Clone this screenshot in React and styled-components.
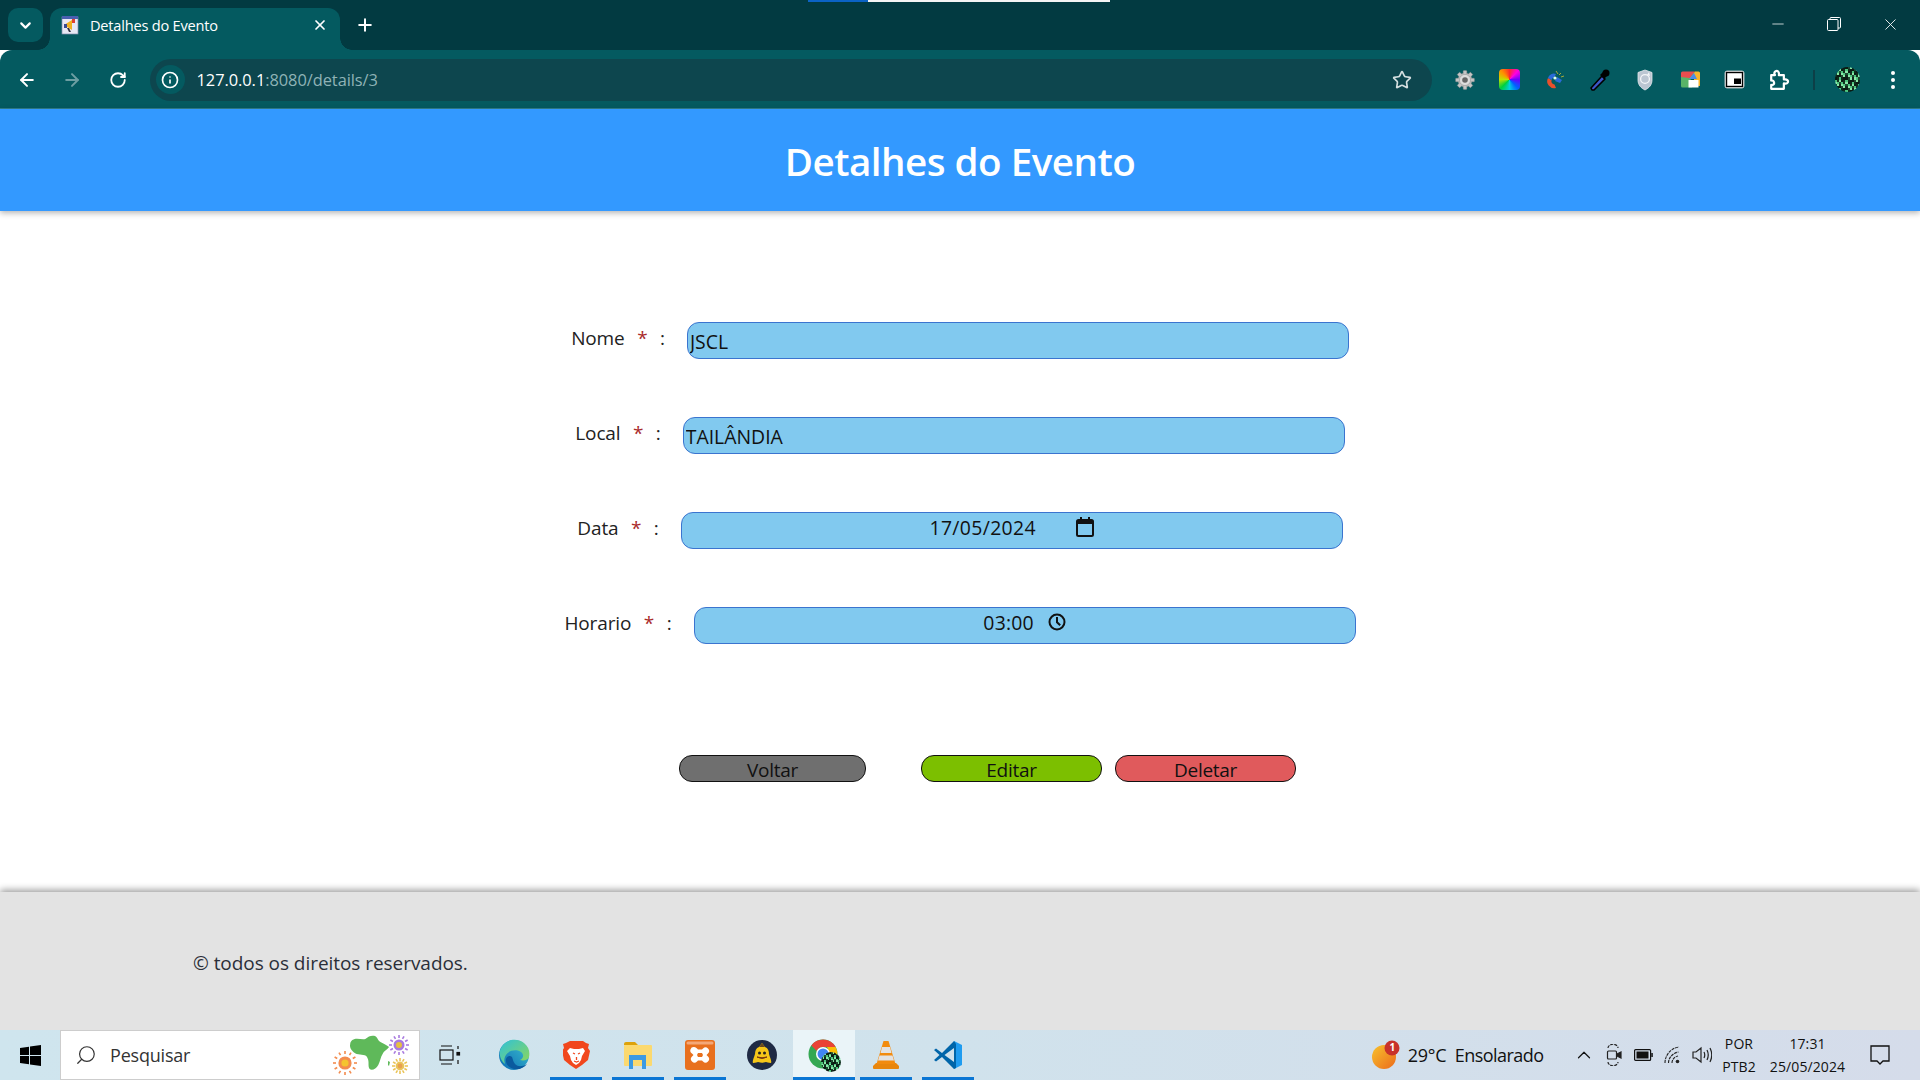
import React from "react";
import styled, { createGlobalStyle } from "styled-components";
import { ArrowLeft, ArrowRight, RotateCw, Info, Star, X, Plus, ChevronDown, Minus, Search, ChevronUp } from "lucide-react";

const Global = createGlobalStyle`
  html, body { margin: 0; padding: 0; height: 100%; overflow: hidden; }
  body { font-family: "Open Sans", "Noto Sans", "Liberation Sans", sans-serif; background: #fff; }
  * { box-sizing: border-box; }
`;

const Page = styled.div`
  width: 1920px; height: 1080px; display: flex; flex-direction: column; overflow: hidden; background: #fff;
`;

/* browser chrome */
const TabStrip = styled.div`
  position: relative; height: 50px; background: #023a41; display: flex; align-items: flex-end; flex-shrink: 0; padding-right: 2px;
`;
const LoadLine = styled.div`
  position: absolute; top: 0; left: 808px; width: 302px; height: 2px;
  background: linear-gradient(to right, #0b63c5 0, #0b63c5 60px, #f4f4f4 60px);
`;
const TabMenu = styled.div`
  width: 35px; height: 34px; margin: 0 7px 8px 8px; border-radius: 10px; background: #045a60; color: #fff;
  display: flex; align-items: center; justify-content: center;
`;
const Tab = styled.div`
  position: relative; width: 290px; height: 42px; background: #045a60; border-radius: 12px 12px 0 0;
  display: flex; align-items: center; padding: 0 12px 8px 11px; color: #fff; font-size: 14.6px; letter-spacing: -0.22px;
  &::before, &::after { content: ""; position: absolute; bottom: 0; width: 12px; height: 12px; }
  &::before { left: -12px; background: radial-gradient(circle at 0 0, transparent 11.5px, #045a60 12px); }
  &::after { right: -12px; background: radial-gradient(circle at 100% 0, transparent 11.5px, #045a60 12px); }
`;
const TabTitle = styled.span`
  margin-left: 11px; flex: 1;
`;
const NewTab = styled.div`
  width: 24px; height: 24px; margin: 0 0 13px 13px; color: #fff; display: flex; align-items: center; justify-content: center;
`;
const Grow = styled.div` flex: 1; `;
const WinBtn = styled.div`
  width: 56px; height: 50px; color: #fff; display: flex; align-items: center; justify-content: center; padding-bottom: 2px;
`;
const Toolbar = styled.div`
  height: 59px; background: #045a60; border-radius: 12px 12px 0 0; display: flex; align-items: center; flex-shrink: 0;
  padding: 1px 5px 0 4px; margin-top: 0; border-bottom: 1px solid #2f7f8c;
`;
const NavBtn = styled.div`
  width: 45.5px; height: 40px; display: flex; align-items: center; justify-content: center; color: ${p => p.$dim ? "#6d9ea2" : "#fff"};
`;
const Omni = styled.div`
  flex: 1; height: 42px; margin-left: 9px; border-radius: 21px; background: #0d464e; display: flex; align-items: center; padding: 0 20px 0 6px;
`;
const InfoChip = styled.div`
  width: 29px; height: 29px; border-radius: 50%; background: #045a60; color: #fff; display: flex; align-items: center; justify-content: center;
`;
const Url = styled.div`
  margin-left: 12px; flex: 1; font-size: 16.4px; letter-spacing: -0.05px; color: #8fb3b6;
  b { font-weight: 400; color: #fff; }
`;
const ExtRow = styled.div`
  display: flex; align-items: center; margin-left: 10px;
`;
const ExtBtn = styled.div`
  width: 45px; height: 40px; display: flex; align-items: center; justify-content: center;
`;
const Wheel = styled.div`
  width: 21px; height: 21px; border-radius: 4px;
  background: conic-gradient(from 0deg, #ff2a2a, #ff00e0, #6a00ff, #0060ff, #00d0e0, #00d040, #c0e000, #ff9000, #ff2a2a);
`;
const Divider = styled.div`
  width: 2px; height: 20px; background: #0d3f47; margin: 0 10px 0 11px;
`;

/* page */
const Header = styled.header`
  height: 102px; background: #3399ff; color: #fff; display: flex; align-items: center; justify-content: center; flex-shrink: 0;
  box-shadow: 0 2px 6px rgba(0,0,0,.3); position: relative; z-index: 1; padding-top: 3px;
`;
const Title = styled.h1`
  margin: 0; font-size: 38.6px; font-weight: 600; letter-spacing: -0.5px; line-height: 1;
`;
const Main = styled.main`
  flex: 1; padding-top: 111px; background: #fff;
`;
const Row = styled.div`
  display: flex; justify-content: center; align-items: flex-start; height: 37px; margin-bottom: 58px;
`;
const Label = styled.label`
  display: flex; gap: 12.5px; margin-right: 22px; font-size: 19px; letter-spacing: -0.12px; color: #222; line-height: 32px;
  white-space: nowrap;
`;
const Req = styled.span` color: #a92b2b; `;
const TextField = styled.input`
  width: 662px; height: 37px; border: 1px solid #3b74cf; border-radius: 12px; background: #81c9ef; color: #111; outline: none;
  font: 400 19.4px "Open Sans", sans-serif; letter-spacing: 0; padding: 2px 2px 0;
`;
const PickerField = styled.div`
  width: 662px; height: 37px; border: 1px solid #3b74cf; border-radius: 12px; background: #81c9ef; color: #111;
  display: flex; align-items: center; justify-content: center; gap: ${p => p.$gap}px; font-size: 19.4px; letter-spacing: ${p => p.$ls}px; padding-bottom: 7px;
`;
const Actions = styled.div`
  display: flex; padding: 53px 0 0 679px;
`;
const ActionBtn = styled.button`
  width: ${p => p.$w}px; height: 27px; margin-right: ${p => p.$mr}px; border: 1px solid #111; border-radius: 13px; background: ${p => p.$bg}; color: #111;
  font: 400 19px "Open Sans", sans-serif; letter-spacing: -0.3px; padding: 2px 0 0; line-height: 24px; display: flex; align-items: center; justify-content: center;
`;
const Footer = styled.footer`
  height: 138px; background: #e3e3e3; flex-shrink: 0; box-shadow: 0 -2px 7px rgba(0,0,0,.4); padding: 57px 0 0 193px;
  font-size: 19px; letter-spacing: -0.05px; color: #2b2f38; line-height: 28px; position: relative;
`;

/* taskbar */
const Taskbar = styled.div`
  height: 50px; flex-shrink: 0; display: flex; align-items: stretch; position: relative; color: #111;
  background: linear-gradient(to right, #cfe5ee, #d0e2ec 50%, #d5dcea);
`;
const StartBtn = styled.div`
  width: 60px; display: flex; align-items: center; justify-content: center;
`;
const SearchBox = styled.div`
  width: 360px; background: #fff; border: 1px solid #cdcdcd; display: flex; align-items: center; padding: 0 8px 0 14px; font-size: 18px; letter-spacing: -0.2px; color: #333;
`;
const SearchLabel = styled.span` margin-left: 13px; flex: 1; `;
const TaskView = styled.div`
  width: 63px; padding-right: 4px; display: flex; align-items: center; justify-content: center;
`;
const AppSlot = styled.div`
  position: relative; width: 62px; display: flex; align-items: center; justify-content: center;
  background: ${p => p.$active ? "#eaf4f8" : "transparent"};
  &::after {
    content: ""; display: ${p => p.$open || p.$active ? "block" : "none"}; position: absolute; bottom: 0; height: 3px;
    left: ${p => p.$active ? 0 : 5}px; right: ${p => p.$active ? 0 : 5}px; background: #0b76d4;
  }
`;
const Tray = styled.div`
  margin-left: auto; display: flex; align-items: center; padding-right: 19px; font-size: 18px; letter-spacing: -0.3px; color: #111;
`;
const Weather = styled.span`
  margin-left: 8px; white-space: nowrap;
`;
const Condition = styled.span`
  margin: 0 26px 0 8.5px; white-space: nowrap; letter-spacing: -0.55px;
`;
const TrayIcon = styled.div`
  width: 29.5px; display: flex; align-items: center; justify-content: center;
`;
const TrayText = styled.div`
  width: ${p => p.$w}px; margin-left: ${p => p.$ml || 0}px; display: flex; flex-direction: column; align-items: center; font-size: 14px; line-height: 23px; letter-spacing: 0.1px; white-space: nowrap;
`;
const Notice = styled.div`
  width: 42px; margin-left: 13px; display: flex; align-items: center; justify-content: center;
`;

/* drawings */
const Favicon = () => (
  <svg width="18" height="20" viewBox="0 0 18 20">
    <rect x="1" y="2" width="16" height="17" fill="#e8e8f4" stroke="#8890b0" strokeWidth=".7" />
    <rect x="1" y="1" width="16" height="3" fill="#4a5fb0" />
    <path d="M3 10l8-5v10z" fill="#f0b020" /><path d="M3 9h3v4H3z" fill="#3a4a90" /><path d="M11 4l3 0v4h-3z" fill="#e04030" />
    <path d="M6 13l2 4h2l-2-4z" fill="#334" />
  </svg>
);
const Gear = () => (
  <svg width="20" height="20" viewBox="0 0 20 20">
    <g fill="#c4c4c4" stroke="#888" strokeWidth=".4">
      <circle cx="10" cy="10" r="7" />
      {[0, 45, 90, 135, 180, 225, 270, 315].map(a => <rect key={a} x="8.2" y="0.6" width="3.6" height="4" rx=".6" transform={`rotate(${a} 10 10)`} />)}
    </g>
    <circle cx="10" cy="10" r="5" fill="#ddd" /><circle cx="10" cy="10" r="2.8" fill="#666" />
  </svg>
);
const Magnet = () => (
  <svg width="22" height="22" viewBox="0 0 22 22">
    <path d="M4 9a7 7 0 0 0 8 10l-1.5-3.6A3.2 3.2 0 0 1 7.6 11z" fill="#e8502c" />
    <path d="M4 9a6 6 0 0 1 8-4l-1.8 3.4A3 3 0 0 0 7.6 11z" fill="#2a6bd8" />
    <path d="M13 8l5 3-2 3-5-2z" fill="#2a6bd8" /><circle cx="11" cy="9" r="1.6" fill="#dfe" />
    <path d="M12 2l2 3M17 4l-2 2M20 7l-3 1" stroke="#a8a838" strokeWidth="1" />
  </svg>
);
const Dropper = () => (
  <svg width="22" height="24" viewBox="0 0 22 24">
    <path d="M3 22l-1-2L13 8l3 3L5 22z" fill="#3d56c8" stroke="#000" strokeWidth="1.6" strokeLinejoin="round" />
    <path d="M11 7l5-5 4 4-5 5z" fill="#000" /><circle cx="17" cy="5" r="3.5" fill="#000" />
  </svg>
);
const Shield = () => (
  <svg width="18" height="22" viewBox="0 0 18 22">
    <path d="M9 1l7 2.5V11c0 5-3 8-7 10-4-2-7-5-7-10V3.500z" fill="#bcc6d2" stroke="#e4e8ee" strokeWidth=".8" />
    <circle cx="9" cy="10" r="4.400" fill="none" stroke="#f4f6f8" strokeWidth="1.300" />
    <path d="M13 3l1 4-3-1z" fill="#f4f6f8" />
  </svg>
);
const Tile = () => (
  <svg width="20" height="17" viewBox="0 0 20 17">
    <path d="M1 2a1.500 1.500 0 0 1 1.500-1.500H15L9 8H1z" fill="#ea4d4f" />
    <path d="M15 .5h3.500A1.500 1.500 0 0 1 20 2v13l-6-.500V8H9z" fill="#f7b52c" />
    <path d="M1 6l8 1 3 2.500V16.500H2.500A1.500 1.500 0 0 1 1 15z" fill="#58b368" />
    <path d="M9 8l5-6 3 6z" fill="#4a8de8" /><rect x="8.500" y="9" width="10" height="7.500" fill="#fff" />
  </svg>
);
const Pip = () => (
  <svg width="21" height="19" viewBox="0 0 21 19">
    <rect x="1" y="1" width="19" height="17" rx="2" fill="#fff" stroke="#d8d8d8" strokeWidth=".8" />
    <rect x="2.500" y="2.500" width="16" height="14" fill="#fff" stroke="#000" strokeWidth="1.400" />
    <rect x="10" y="8.500" width="7" height="5.500" fill="#000" />
  </svg>
);
const Puzzle = () => (
  <svg width="22" height="22" viewBox="0 0 20 20" fill="none" stroke="#fff" strokeWidth="2" strokeLinejoin="round">
    <path d="M2 5.500h3.500a2.200 2.200 0 0 1 .5-3.500c1.600-.8 3.500.4 3 3.500h4.500V9.500c3-.6 4.300 1.300 3.500 2.800-.6 1.100-2 1.300-3.500.7V18H2v-3.500c2.200.4 3-1.100 2.500-2.500s-1.500-2-2.500-1.500z" />
  </svg>
);
const avatarCells = Array.from({ length: 144 }, (_, i) => ({ x: i % 12, y: Math.floor(i / 12), v: (i * i * 7 + i * 13 + (i % 5)) % 6 }));
const cellColors = ["#0a1a12", "#1d4a30", "#4ec47e", "#0f2a1c", "#8ae8a8", "#12301f"];
const Avatar = ({ size = 25 }) => (
  <svg width={size} height={size} viewBox="0 0 12 12">
    <defs><clipPath id={`av${size}`}><circle cx="6" cy="6" r="6" /></clipPath></defs>
    <g clipPath={`url(#av${size})`} shapeRendering="crispEdges">
      {avatarCells.map((c, i) => <rect key={i} x={c.x} y={c.y} width="1" height="1" fill={cellColors[c.v]} />)}
    </g>
  </svg>
);
const Kebab = () => (
  <svg width="6" height="20" viewBox="0 0 6 20" fill="#fff"><circle cx="3" cy="3" r="2" /><circle cx="3" cy="10" r="2" /><circle cx="3" cy="17" r="2" /></svg>
);
const Restore = () => (
  <svg width="14" height="14" viewBox="0 0 14 14" fill="none" stroke="#fff" strokeWidth="1"><rect x=".5" y="2.500" width="10.500" height="11" rx="1" /><path d="M3 2.500V1.500a1 1 0 0 1 1-1h8.500a1 1 0 0 1 1 1v8.500a1 1 0 0 1-1 1H11" /></svg>
);
const Calendar = () => (
  <svg width="18" height="20" viewBox="0 0 18 20">
    <path d="M4 0h2v2h6V0h2v2h1.500A2.500 2.500 0 0 1 18 4.500v13a2.500 2.500 0 0 1-2.500 2.500h-13A2.500 2.500 0 0 1 0 17.500v-13A2.500 2.500 0 0 1 2.500 2H4zM2 7v10.500a.5.5 0 0 0 .5.5h13a.5.5 0 0 0 .5-.5V7z" fill="#111" />
  </svg>
);
const Clock = () => (
  <svg width="18" height="18" viewBox="0 0 18 18" fill="none" stroke="#111" strokeWidth="2">
    <circle cx="9" cy="9" r="7.500" /><path d="M9 4v5.200l3.200 3" />
  </svg>
);
const WinLogo = () => (
  <svg width="21" height="21" viewBox="0 0 21 21" fill="#000"><path d="M0 3l9-1.300V10H0zM10 1.500L21 0v10H10zM0 11h9v8.300L0 18zM10 11h11v10l-11-1.500z" /></svg>
);
const flower = (cx, cy, r, c1, c2) => (
  <g>
    {Array.from({ length: 12 }, (_, i) => <rect key={i} x={cx - .8} y={cy - r} width="1.600" height="3" fill={c1} transform={`rotate(${i * 30} ${cx} ${cy})`} />)}
    <circle cx={cx} cy={cy} r={r * .55} fill={c1} /><circle cx={cx} cy={cy} r={r * .3} fill={c2} />
  </g>
);
const SearchArt = () => (
  <svg width="78" height="42" viewBox="0 0 78 42">
    <path transform="translate(1 0) scale(1.08 1)" d="M17 6c4-3 8 0 12-1 3-3 6-4 9-3 3 2 2 4 5 6 3 2 6 3 8 5-2 3-5 4-6 7-2 3-2 7-4 11-2 4-6 6-8 4-2-3 0-7-2-11-1-4-6-3-10-4-4-2-7-6-6-10 0-2 1-3 2-4z" fill="#5fb95a" />
    <path d="M55 27l2 1-1 4-1-1z" fill="#5fb95a" />
    {flower(12, 29, 12, "#f38c4f", "#f4c430")}
    {flower(66, 11, 10, "#a97adf", "#e6c040")}
    {flower(67, 32, 8, "#eac55b", "#e8a050")}
  </svg>
);
const TaskViewIcon = () => (
  <svg width="22" height="20" viewBox="0 0 22 20" fill="none" stroke="#111" strokeWidth="1.200">
    <path d="M2 1h11M2 19h11" /><rect x="1" y="5" width="13" height="10" /><path d="M19 1v3M19 15v4" /><rect x="18" y="7.500" width="2.500" height="2.500" fill="#111" />
  </svg>
);
const Edge = () => (
  <svg width="32" height="32" viewBox="0 0 32 32">
    <defs>
      <linearGradient id="edg" x1="0" y1="1" x2="1" y2="0"><stop offset="0" stopColor="#0b6bb4" /><stop offset="1" stopColor="#3ec3d0" /></linearGradient>
      <linearGradient id="edg2" x1="0" y1="0" x2="1" y2="1"><stop offset="0" stopColor="#2fc1d8" /><stop offset="1" stopColor="#8ed858" /></linearGradient>
    </defs>
    <circle cx="16" cy="16" r="15" fill="url(#edg)" />
    <path d="M3 9C7 1 18-2 26 4c5 4 6 9 5 14-1 3-5 4-9 3 4-2 4-6 1-8-4-3-12-2-15 3-2 3-2 6-1 9C3 22 0 15 3 9z" fill="url(#edg2)" />
    <path d="M8 20c-1 5 3 9 8 10 5 1 10-1 13-5-5 3-9 3-12 0-2-2-2-5-3-7-2-2-5-1-6 2z" fill="#0a5a9e" />
  </svg>
);
const Brave = () => (
  <svg width="27" height="30" viewBox="0 0 27 30">
    <path d="M7 1h13l3 2 3 1-1 4 2 3-2 9-6 5-6 4-6-4-6-5-2-9 2-3-1-4 3-1z" fill="#f1471d" />
    <path d="M7 8l4 1h5l4-1 2 3-3 5-1 4-2 3-3 2-3-2-2-3-1-4-3-5z" fill="#fff" />
    <path d="M10 13l2 1M17 13l-2 1M13.500 17v3M11 21l2.500 1 2.500-1" stroke="#f1471d" strokeWidth="1.300" fill="none" />
  </svg>
);
const Folder = () => (
  <svg width="28" height="27" viewBox="0 0 28 27">
    <path d="M0 2a2 2 0 0 1 2-2h9l3 3H0z" fill="#dda20a" />
    <rect y="3" width="28" height="21" rx="1" fill="#fbd96f" />
    <path d="M5 27V13h17v14h-4v-9h-9v9z" fill="#3c9ae2" />
  </svg>
);
const Xampp = () => (
  <svg width="30" height="30" viewBox="0 0 30 30">
    <rect width="30" height="30" rx="3" fill="#e8701e" />
    <rect x="1.500" y="1.500" width="27" height="3" rx="1.500" fill="#f4a878" />
    <path d="M9 7a3.500 3.500 0 0 0-2 6.500l1.500 1.500L7 16.500A3.500 3.500 0 1 0 12 21.500l1-1h4l1 1A3.500 3.500 0 1 0 23 16.500L21.500 15 23 13.500A3.500 3.500 0 1 0 18 8.500l-1 1h-4l-1-1A3.500 3.500 0 0 0 9 7zm4 6h4l1 2-1 2h-4l-1-2z" fill="#fff" fillRule="evenodd" />
  </svg>
);
const Pingus = () => (
  <svg width="30" height="30" viewBox="0 0 30 30">
    <circle cx="15" cy="15" r="15" fill="#1f2a44" />
    <path d="M15 3l3 4c3 1 4 4 4 7 1 4 3 7 2 9-3 0-4-1-5-1-3 1-5 1-8 0-1 0-2 1-5 1-1-2 1-5 2-9 0-3 1-6 4-7z" fill="#f6c619" />
    <path d="M15 3l3 4h-6z" fill="#6b4a1e" />
    <circle cx="12.500" cy="13" r="1.500" fill="#222" /><circle cx="17.500" cy="13" r="1.500" fill="#222" />
    <path d="M10 17q5 3 10 0-5 1.500-10 0z" fill="#7a3a10" stroke="#7a3a10" />
  </svg>
);
const Chrome = () => (
  <svg width="33" height="33" viewBox="0 0 33 33">
    <circle cx="15" cy="15" r="14.500" fill="#34a853" />
    <path d="M15 .5A14.500 14.500 0 0 1 27.600 8H15a7 7 0 0 0-6.300 4L3.400 6.400A14.500 14.500 0 0 1 15 .5z" fill="#ea4335" />
    <path d="M27.600 8a14.500 14.500 0 0 1-2 17L19 16a7 7 0 0 0 0-8z" fill="#fbbc04" />
    <circle cx="15" cy="15" r="7" fill="#fff" /><circle cx="15" cy="15" r="5.500" fill="#4285f4" />
    <foreignObject x="13" y="13" width="20" height="20"><Avatar size={20} /></foreignObject>
  </svg>
);
const Vlc = () => (
  <svg width="26" height="30" viewBox="0 0 26 30">
    <path d="M0 26l3-3h20l3 3v2a1 1 0 0 1-1 1H1a1 1 0 0 1-1-1z" fill="#e8860c" />
    <path d="M10.500 1h5l7 23H3.500z" fill="#f28b0e" />
    <path d="M9 7h8l1.500 6h-11zM6.500 15.500h13l1.500 5H5z" fill="#e2e2e2" />
  </svg>
);
const VsCode = () => (
  <svg width="30" height="30" viewBox="0 0 30 30">
    <path d="M21 1l8 4v20l-8 4V1z" fill="#1f9cf0" />
    <path d="M21 1L9 13 3 8.500 1 10l5.500 5L1 20l2 1.500L9 17l12 12 2-1V4z" fill="#0065a9" />
    <path d="M21 8L11.500 15 21 22z" fill="#d0e2ec" />
  </svg>
);
const WeatherIcon = () => (
  <svg width="28" height="30" viewBox="0 0 28 30">
    <defs><linearGradient id="sun" x1="0" y1="0" x2="1" y2="1"><stop offset="0" stopColor="#f7c22e" /><stop offset="1" stopColor="#ec6a1a" /></linearGradient></defs>
    <circle cx="12" cy="17" r="12" fill="url(#sun)" />
    <circle cx="20" cy="8" r="7.500" fill="#c8322a" />
  </svg>
);
const Badge = styled.span`
  position: absolute; top: 0; left: 13px; width: 15px; text-align: center; font-size: 10px; font-weight: 700; color: #fff; line-height: 15px; letter-spacing: 0;
`;
const WeatherWrap = styled.div`
  position: relative; display: flex; align-items: center;
`;
const Meet = () => (
  <svg width="16" height="22" viewBox="0 0 16 22" fill="none" stroke="#222" strokeWidth="1.200">
    <path d="M2 4a4 3 0 0 1 10 0M2 18a4 3 0 0 0 10 0" strokeDasharray="3 1" />
    <rect x="1.500" y="7" width="9" height="8" rx="1" /><path d="M11 10l4-2v6l-4-2" fill="#222" />
  </svg>
);
const Battery = () => (
  <svg width="19" height="12" viewBox="0 0 19 12"><rect x=".6" y=".6" width="16" height="10.800" rx="1" fill="none" stroke="#111" strokeWidth="1.200" /><rect x="2.500" y="2.500" width="12" height="7" fill="#111" /><rect x="17.300" y="4" width="1.500" height="4" fill="#111" /></svg>
);
const Wifi = () => (
  <svg width="18" height="18" viewBox="0 0 18 18" fill="none" stroke="#222" strokeWidth="1.100">
    <path d="M1 17C1 9 7 2 15 1M4.500 17c0-5 4-10 10-11M8 17c0-3 2-6 6-7" strokeDasharray="3 .8" /><circle cx="13.500" cy="15.500" r="1.800" fill="#222" stroke="none" />
  </svg>
);
const Speaker = () => (
  <svg width="20" height="18" viewBox="0 0 20 18" fill="none" stroke="#222" strokeWidth="1.200">
    <path d="M1 6h3l5-4v14l-5-4H1zM12 6q1.500 3 0 6M15 4q2.500 5 0 10M18 2q3.500 7 0 14" />
  </svg>
);
const Bubble = () => (
  <svg width="20" height="20" viewBox="0 0 20 20" fill="none" stroke="#111" strokeWidth="1.300"><path d="M1 1h18v15h-6l-3 3-3-3H1z" /></svg>
);

export default function App() {
  return (
    <Page>
      <Global />
      <TabStrip>
        <LoadLine />
        <TabMenu><ChevronDown size={17} strokeWidth={3} /></TabMenu>
        <Tab>
          <Favicon />
          <TabTitle>Detalhes do Evento</TabTitle>
          <X size={16} strokeWidth={2.6} />
        </Tab>
        <NewTab><Plus size={20} strokeWidth={2.4} /></NewTab>
        <Grow />
        <WinBtn><Minus size={18} strokeWidth={1} /></WinBtn>
        <WinBtn><Restore /></WinBtn>
        <WinBtn><X size={19} strokeWidth={1.1} /></WinBtn>
      </TabStrip>
      <Toolbar>
        <NavBtn><ArrowLeft size={20} strokeWidth={2.4} /></NavBtn>
        <NavBtn $dim><ArrowRight size={20} strokeWidth={2.4} /></NavBtn>
        <NavBtn><RotateCw size={18} strokeWidth={2.4} /></NavBtn>
        <Omni>
          <InfoChip><Info size={18} strokeWidth={2.2} /></InfoChip>
          <Url><b>127.0.0.1</b>:8080/details/3</Url>
          <Star size={20} strokeWidth={2} color="#d4dfe0" />
        </Omni>
        <ExtRow>
          <ExtBtn><Gear /></ExtBtn>
          <ExtBtn><Wheel /></ExtBtn>
          <ExtBtn><Magnet /></ExtBtn>
          <ExtBtn><Dropper /></ExtBtn>
          <ExtBtn><Shield /></ExtBtn>
          <ExtBtn><Tile /></ExtBtn>
          <ExtBtn><Pip /></ExtBtn>
          <ExtBtn><Puzzle /></ExtBtn>
          <Divider />
          <ExtBtn><Avatar /></ExtBtn>
          <ExtBtn><Kebab /></ExtBtn>
        </ExtRow>
      </Toolbar>
      <Header><Title>Detalhes do Evento</Title></Header>
      <Main>
        <Row>
          <Label>Nome <Req>*</Req> <span>:</span></Label>
          <TextField readOnly value="JSCL" />
        </Row>
        <Row>
          <Label>Local <Req>*</Req> <span>:</span></Label>
          <TextField readOnly value="TAILÂNDIA" />
        </Row>
        <Row>
          <Label>Data <Req>*</Req> <span>:</span></Label>
          <PickerField $gap={40} $ls={0.35}>17/05/2024 <Calendar /></PickerField>
        </Row>
        <Row>
          <Label>Horario <Req>*</Req> <span>:</span></Label>
          <PickerField $gap={14} $ls={0.2}>03:00 <Clock /></PickerField>
        </Row>
        <Actions>
          <ActionBtn $w={187} $mr={55} $bg="#6f6f6f">Voltar</ActionBtn>
          <ActionBtn $w={181} $mr={13} $bg="#7cbf00">Editar</ActionBtn>
          <ActionBtn $w={181} $mr={0} $bg="#e05a5c">Deletar</ActionBtn>
        </Actions>
      </Main>
      <Footer>© todos os direitos reservados.</Footer>
      <Taskbar>
        <StartBtn><WinLogo /></StartBtn>
        <SearchBox>
          <Search size={22} strokeWidth={1.3} style={{ transform: "scaleX(-1)" }} />
          <SearchLabel>Pesquisar</SearchLabel>
          <SearchArt />
        </SearchBox>
        <TaskView><TaskViewIcon /></TaskView>
        <AppSlot><Edge /></AppSlot>
        <AppSlot $open><Brave /></AppSlot>
        <AppSlot $open><Folder /></AppSlot>
        <AppSlot $open><Xampp /></AppSlot>
        <AppSlot><Pingus /></AppSlot>
        <AppSlot $active><Chrome /></AppSlot>
        <AppSlot $open><Vlc /></AppSlot>
        <AppSlot $open><VsCode /></AppSlot>
        <Tray>
          <WeatherWrap><WeatherIcon /><Badge>1</Badge></WeatherWrap>
          <Weather>29°C</Weather>
          <Condition>Ensolarado</Condition>
          <TrayIcon><ChevronUp size={22} strokeWidth={1.3} /></TrayIcon>
          <TrayIcon><Meet /></TrayIcon>
          <TrayIcon><Battery /></TrayIcon>
          <TrayIcon><Wifi /></TrayIcon>
          <TrayIcon><Speaker /></TrayIcon>
          <TrayText $w={40} $ml={2}><span>POR</span><span>PTB2</span></TrayText>
          <TrayText $w={77} $ml={10}><span>17:31</span><span>25/05/2024</span></TrayText>
          <Notice><Bubble /></Notice>
        </Tray>
      </Taskbar>
    </Page>
  );
}
